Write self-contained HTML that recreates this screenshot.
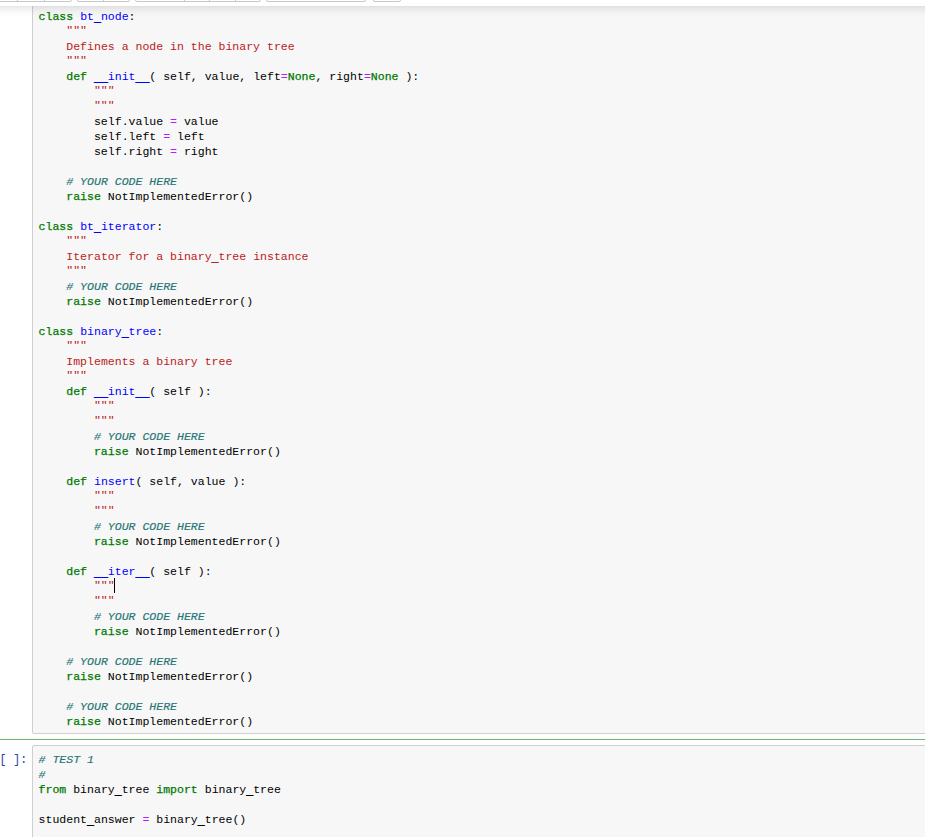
<!DOCTYPE html>
<html><head><meta charset="utf-8"><style>
html,body{margin:0;padding:0;}
body{width:925px;height:837px;overflow:hidden;position:relative;background:#fff;font-family:"Liberation Mono",monospace;}
.hdr{position:absolute;left:0;top:0;width:925px;height:6px;background:#fff;z-index:10;overflow:hidden;}
.tb{position:absolute;top:-20px;height:22px;border:1px solid #c8c8c8;border-radius:2px;background:#fff;box-sizing:border-box;}
.dv{position:absolute;top:-20px;height:22px;width:1px;background:#c8c8c8;}
.shadow{position:absolute;left:0;top:6px;width:925px;height:14px;z-index:5;}
.shadow div{position:absolute;left:0;width:925px;height:1px;}
.ia{position:absolute;left:32px;width:1000px;border:1px solid #cfcfcf;border-radius:2px;background:#f7f7f7;box-sizing:border-box;}
pre{position:absolute;margin:0;font-family:"Liberation Mono",monospace;font-size:11.545px;line-height:15px;color:#000;white-space:pre;}
.k{color:#007800;font-weight:normal;-webkit-text-stroke:0.25px #007800;}
.d{color:#0000ff;}
.s{color:#ba2121;}
.c{color:#257575;font-style:italic;-webkit-text-stroke:0.15px #257575;}
.o{color:#aa22ff;}
.u{position:relative;top:2px;-webkit-text-stroke-width:0.4px;}
.q{display:inline-block;transform:translateY(0px) scaleY(0.75);transform-origin:50% 17%;}
.green{position:absolute;left:0;top:739px;width:925px;height:1px;background:#66bb6a;}
.prompt{position:absolute;left:-0.5px;transform:scaleY(1.15);transform-origin:50% 66%;top:751.8px;font-family:"Liberation Mono",monospace;font-size:11.545px;line-height:15px;color:#303f9f;white-space:pre;}
.cursor{position:absolute;left:114px;top:578px;width:1px;height:15px;background:#000;}
</style></head><body>
<div class="hdr">
<div class="tb" style="left:-20px;width:92px"></div>
<div class="dv" style="left:17px"></div><div class="dv" style="left:44px"></div>
<div class="tb" style="left:77px;width:53px"></div>
<div class="dv" style="left:103px"></div>
<div class="tb" style="left:135px;width:126px"></div>
<div class="dv" style="left:184px"></div><div class="dv" style="left:209px"></div><div class="dv" style="left:235px"></div>
<div class="tb" style="left:266px;width:100px"></div>
<div class="tb" style="left:373px;width:28px"></div>
</div>
<div class="shadow"><div style="top:0px;background:rgba(0,0,0,0.085)"></div><div style="top:1px;background:rgba(0,0,0,0.07)"></div><div style="top:2px;background:rgba(0,0,0,0.058)"></div><div style="top:3px;background:rgba(0,0,0,0.047)"></div><div style="top:4px;background:rgba(0,0,0,0.038)"></div><div style="top:5px;background:rgba(0,0,0,0.03)"></div><div style="top:6px;background:rgba(0,0,0,0.023)"></div><div style="top:7px;background:rgba(0,0,0,0.017)"></div><div style="top:8px;background:rgba(0,0,0,0.012)"></div><div style="top:9px;background:rgba(0,0,0,0.008)"></div><div style="top:10px;background:rgba(0,0,0,0.005)"></div><div style="top:11px;background:rgba(0,0,0,0.003)"></div><div style="top:12px;background:rgba(0,0,0,0.0015)"></div></div>
<div class="ia" style="top:-100px;height:834px"></div>
<pre style="left:38.6px;top:9.3px"><span class="k">class</span> <span class="d">bt<span class="u">_</span>node</span>:
    <span class="s q">"""</span>
    <span class="s">Defines a node in the binary tree</span>
    <span class="s q">"""</span>
    <span class="k">def</span> <span class="d"><span class="u">_</span><span class="u">_</span>init<span class="u">_</span><span class="u">_</span></span>( self, value, left<span class="o">=</span><span class="k">None</span>, right<span class="o">=</span><span class="k">None</span> ):
        <span class="s q">"""</span>
        <span class="s q">"""</span>
        self.value <span class="o">=</span> value
        self.left <span class="o">=</span> left
        self.right <span class="o">=</span> right

    <span class="c"># YOUR CODE HERE</span>
    <span class="k">raise</span> NotImplementedError()

<span class="k">class</span> <span class="d">bt<span class="u">_</span>iterator</span>:
    <span class="s q">"""</span>
    <span class="s">Iterator for a binary<span class="u">_</span>tree instance</span>
    <span class="s q">"""</span>
    <span class="c"># YOUR CODE HERE</span>
    <span class="k">raise</span> NotImplementedError()

<span class="k">class</span> <span class="d">binary<span class="u">_</span>tree</span>:
    <span class="s q">"""</span>
    <span class="s">Implements a binary tree</span>
    <span class="s q">"""</span>
    <span class="k">def</span> <span class="d"><span class="u">_</span><span class="u">_</span>init<span class="u">_</span><span class="u">_</span></span>( self ):
        <span class="s q">"""</span>
        <span class="s q">"""</span>
        <span class="c"># YOUR CODE HERE</span>
        <span class="k">raise</span> NotImplementedError()

    <span class="k">def</span> <span class="d">insert</span>( self, value ):
        <span class="s q">"""</span>
        <span class="s q">"""</span>
        <span class="c"># YOUR CODE HERE</span>
        <span class="k">raise</span> NotImplementedError()

    <span class="k">def</span> <span class="d"><span class="u">_</span><span class="u">_</span>iter<span class="u">_</span><span class="u">_</span></span>( self ):
        <span class="s q">"""</span>
        <span class="s q">"""</span>
        <span class="c"># YOUR CODE HERE</span>
        <span class="k">raise</span> NotImplementedError()

    <span class="c"># YOUR CODE HERE</span>
    <span class="k">raise</span> NotImplementedError()

    <span class="c"># YOUR CODE HERE</span>
    <span class="k">raise</span> NotImplementedError()</pre>
<div class="cursor"></div>
<div class="green"></div>
<div class="ia" style="top:745px;height:200px"></div>
<div class="prompt">[ ]:</div>
<pre style="left:38.6px;top:751.8px"><span class="c"># TEST 1</span>
<span class="c">#</span>
<span class="k">from</span> binary<span class="u">_</span>tree <span class="k">import</span> binary<span class="u">_</span>tree

student<span class="u">_</span>answer <span class="o">=</span> binary<span class="u">_</span>tree()</pre>
</body></html>
